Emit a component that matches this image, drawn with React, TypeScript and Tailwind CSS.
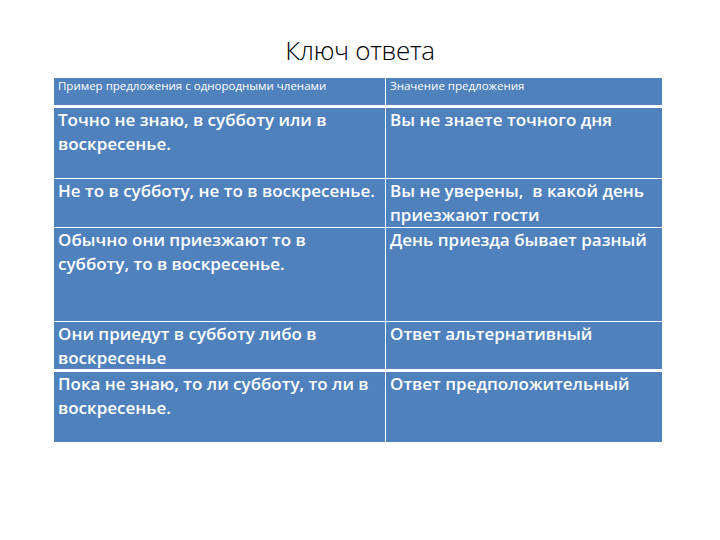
const rows = [
  {
    h: "h-[70px]",
    left: ["Точно не знаю, в субботу или в", "воскресенье."],
    right: ["Вы не знаете точного дня"],
  },
  {
    h: "h-[48px]",
    left: ["Не то в субботу, не то в воскресенье."],
    right: ["Вы не уверены,  в какой день", "приезжают гости"],
  },
  {
    h: "h-[93px]",
    left: ["Обычно они приезжают то в", "субботу, то в воскресенье."],
    right: ["День приезда бывает разный"],
  },
  {
    h: "h-[47px]",
    left: ["Они приедут в субботу либо в", "воскресенье"],
    right: ["Ответ альтернативный"],
  },
  {
    h: "h-[70px]",
    left: ["Пока не знаю, то ли субботу, то ли в", "воскресенье."],
    right: ["Ответ предположительный"],
  },
]

function Cell({ lines, wide }: { lines: string[]; wide?: boolean }) {
  return (
    <div className={`${wide ? "w-[331px]" : "w-[276px]"} bg-[#4f81bd] px-[4px] text-[17px] leading-[24px] font-semibold text-white`}>
      {lines.map((l, i) => (
        <div key={i} className="whitespace-pre">{l}</div>
      ))}
    </div>
  )
}

export default function App() {
  return (
    <div className="w-[720px] h-[540px] bg-white font-['Open_Sans',sans-serif]">
      <div className="pt-[34px] h-[78px] text-center text-[26px] leading-[32px] font-light text-black tracking-[-0.3px]">
        Ключ ответа
      </div>

      <div className="ml-[54px] w-[608px] flex flex-col">
        {/* header */}
        <div className="flex h-[27px] gap-[1px]">
          <div className="w-[331px] bg-[#4f81bd] px-[4px] text-[11.5px] leading-[16px] text-white">
            Пример предложения с однородными членами
          </div>
          <div className="w-[276px] bg-[#4f81bd] px-[4px] text-[11.5px] leading-[16px] text-white">
            Значение предложения
          </div>
        </div>
        <div className="h-[3px]" />

        {rows.map((r, i) => (
          <div key={i} className={`flex gap-[1px] ${r.h} ${i === 4 ? "mt-[3px]" : i > 0 ? "mt-[1px]" : ""}`}>
            <Cell lines={r.left} wide />
            <Cell lines={r.right} />
          </div>
        ))}
      </div>
    </div>
  )
}
